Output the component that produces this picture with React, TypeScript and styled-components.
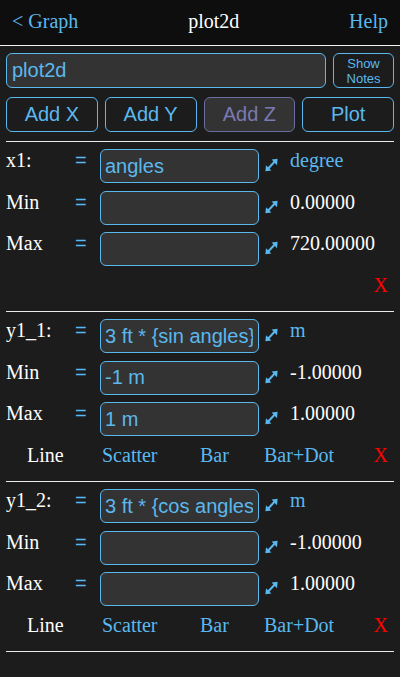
import React from "react";
import styled, { createGlobalStyle, css } from "styled-components";

const BLUE = "#5bb8ee";
const SERIF = `"Liberation Serif", "Times New Roman", serif`;
const SANS = `"Liberation Sans", Arial, sans-serif`;

const GlobalStyle = createGlobalStyle`
  html, body {
    margin: 0;
    padding: 0;
    background: #1c1c1c;
  }
  * {
    box-sizing: border-box;
  }
`;

const Header = styled.header`
  height: 46px;
  display: flex;
  align-items: center;
  justify-content: space-between;
  padding: 0 12px 3px;
  background: #0e0e0e;
  border-bottom: 1px solid #f2f2f2;
  font-family: ${SERIF};
  font-size: 20px;
  line-height: 22px;
`;

const HeaderLink = styled.span`
  color: ${BLUE};
`;

const HeaderTitle = styled.span`
  color: #fff;
`;

const Body = styled.main`
  padding: 0 6px;
`;

const TitleRow = styled.div`
  display: flex;
  gap: 7px;
  margin-top: 7px;
  height: 35px;
`;

const TextField = styled.input`
  flex: 1;
  min-width: 0;
  height: 100%;
  padding: 0 5px;
  background: #333;
  border: 1px solid ${BLUE};
  border-radius: 6px;
  color: ${BLUE};
  font-family: ${SANS};
  font-size: 20px;
  outline: none;
`;

const NotesButton = styled.button`
  width: 61px;
  height: 100%;
  padding: 0;
  background: #1c1c1c;
  border: 1px solid ${BLUE};
  border-radius: 6px;
  color: ${BLUE};
  font-family: ${SANS};
  font-size: 13px;
  line-height: 15px;
`;

const ButtonRow = styled.div`
  display: grid;
  grid-template-columns: repeat(4, 1fr);
  gap: 7px;
  margin: 9px 0;
  height: 35px;
`;

const ActionButton = styled.button<{ $disabled?: boolean }>`
  height: 100%;
  padding: 0;
  background: #1c1c1c;
  border: 1px solid ${BLUE};
  border-radius: 6px;
  color: ${BLUE};
  font-family: ${SANS};
  font-size: 20px;
  ${(p) =>
    p.$disabled &&
    css`
      background: #333;
      border-color: #6c6c9e;
      color: #7a7ab4;
    `}
`;

const Section = styled.section`
  border-top: 1px solid #ececec;
  padding: 7px 0 15px;
`;

const Rows = styled.div`
  display: flex;
  flex-direction: column;
  gap: 7.5px;
`;

const FieldRow = styled.div`
  display: grid;
  grid-template-columns: 69px 25px 159px 31px 1fr;
  align-items: start;
  height: 34px;
`;

const Label = styled.span`
  color: #fff;
  font-family: ${SERIF};
  font-size: 20px;
  line-height: 22px;
  white-space: nowrap;
`;

const Equals = styled.span`
  color: ${BLUE};
  font-family: ${SANS};
  font-size: 20px;
  line-height: 22px;
`;

const FieldInput = styled.input`
  width: 159px;
  height: 34px;
  padding: 0 5px 0 4px;
  background: #333;
  border: 1px solid ${BLUE};
  border-radius: 6px;
  color: ${BLUE};
  font-family: ${SANS};
  font-size: 20px;
  outline: none;
`;

const ResizeIcon = styled.svg`
  margin: 9px 0 0 6px;
  width: 13px;
  height: 14px;
`;

const Value = styled.span<{ $unit?: boolean }>`
  color: ${(p) => (p.$unit ? BLUE : "#fff")};
  font-family: ${SERIF};
  font-size: 20px;
  line-height: 22px;
  white-space: nowrap;
`;

const ChartRow = styled.div<{ $only?: boolean }>`
  display: grid;
  grid-template-columns: ${(p) => (p.$only ? "1fr auto" : "75px 98px 64px 1fr auto")};
  margin-top: 8px;
  padding: 0 6px 0 21px;
  font-family: ${SERIF};
  font-size: 20px;
  line-height: 22px;
`;

const ChartOption = styled.span<{ $active?: boolean }>`
  color: ${(p) => (p.$active ? "#fff" : BLUE)};
`;

const DeleteMark = styled.span`
  color: #ff0000;
`;

// diagonal double arrow next to each field
const Arrow = () => (
  <ResizeIcon viewBox="0 0 13 14">
    <line x1="2.8" y1="11" x2="10.2" y2="3" stroke={BLUE} strokeWidth="2" />
    <polygon points="12.6,0.8 6.6,1.4 12,7.2" fill={BLUE} />
    <polygon points="0.4,13.2 1,7.2 6.4,12.6" fill={BLUE} />
  </ResizeIcon>
);

type Field = { label: string; input: string; value: string; unit?: boolean };
type Variable = { fields: Field[]; charts: boolean };

const variables: Variable[] = [
  {
    charts: false,
    fields: [
      { label: "x1:", input: "angles", value: "degree", unit: true },
      { label: "Min", input: "", value: "0.00000" },
      { label: "Max", input: "", value: "720.00000" },
    ],
  },
  {
    charts: true,
    fields: [
      { label: "y1_1:", input: "3 ft * {sin angles}", value: "m", unit: true },
      { label: "Min", input: "-1 m", value: "-1.00000" },
      { label: "Max", input: "1 m", value: "1.00000" },
    ],
  },
  {
    charts: true,
    fields: [
      { label: "y1_2:", input: "3 ft * {cos angles}", value: "m", unit: true },
      { label: "Min", input: "", value: "-1.00000" },
      { label: "Max", input: "", value: "1.00000" },
    ],
  },
];

export default function App() {
  return (
    <>
      <GlobalStyle />
      <Header>
        <HeaderLink>&lt; Graph</HeaderLink>
        <HeaderTitle>plot2d</HeaderTitle>
        <HeaderLink>Help</HeaderLink>
      </Header>
      <Body>
        <TitleRow>
          <TextField defaultValue="plot2d" />
          <NotesButton>
            Show
            <br />
            Notes
          </NotesButton>
        </TitleRow>
        <ButtonRow>
          <ActionButton>Add X</ActionButton>
          <ActionButton>Add Y</ActionButton>
          <ActionButton $disabled>Add Z</ActionButton>
          <ActionButton>Plot</ActionButton>
        </ButtonRow>
        {variables.map((v, i) => (
          <Section key={i}>
            <Rows>
              {v.fields.map((f) => (
                <FieldRow key={f.label}>
                  <Label>{f.label}</Label>
                  <Equals>=</Equals>
                  <FieldInput defaultValue={f.input} />
                  <Arrow />
                  <Value $unit={f.unit}>{f.value}</Value>
                </FieldRow>
              ))}
            </Rows>
            {v.charts ? (
              <ChartRow>
                <ChartOption $active>Line</ChartOption>
                <ChartOption>Scatter</ChartOption>
                <ChartOption>Bar</ChartOption>
                <ChartOption>Bar+Dot</ChartOption>
                <DeleteMark>X</DeleteMark>
              </ChartRow>
            ) : (
              <ChartRow $only>
                <span />
                <DeleteMark>X</DeleteMark>
              </ChartRow>
            )}
          </Section>
        ))}
        <Section />
      </Body>
    </>
  );
}
